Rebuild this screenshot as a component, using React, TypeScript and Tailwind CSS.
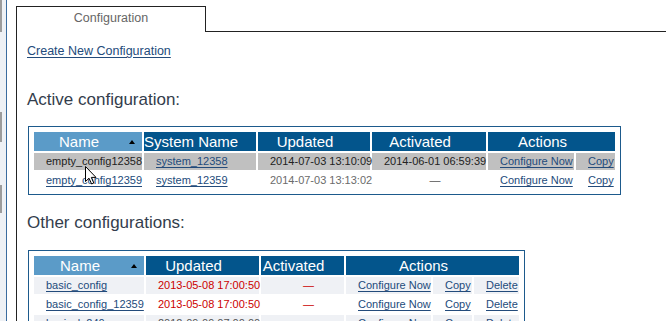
const link = "text-[#234b7b] underline underline-offset-[2px]";
const thBase = "whitespace-nowrap p-0 pr-[18px] text-center font-normal";
const th = `${thBase} bg-[#03558c]`;
const thSorted = `relative ${thBase} bg-[#5b9bc8]`;

function SortArrow() {
  return (
    <span className="absolute right-[7px] top-[8px] h-0 w-0 border-x-[3px] border-b-[4px] border-x-transparent border-b-black" />
  );
}

function Cursor() {
  return (
    <svg className="absolute left-[85px] top-[166px]" width="13" height="19" viewBox="0 0 13 19">
      <path d="M0.5 0.5 L0.5 15.5 L4 12.2 L6.6 18 L8.8 17 L6.3 11.4 L11 11.4 Z" fill="#fff" stroke="#000" strokeWidth="1" />
    </svg>
  );
}

export default function App() {
  return (
    <div className="relative flex h-[321px] w-[666px] overflow-hidden bg-white font-['Liberation_Sans',Arial,sans-serif] text-[#222]">
      {/* side rail */}
      <div className="flex w-[6px] shrink-0 flex-col bg-[#eef1f5]">
        <div className="h-[32px] w-[2px] bg-[#9c9c9c]" />
        <div className="mt-[80px] h-[30px] w-[2px] bg-[#9c9c9c]" />
        <div className="mt-[43px] h-[28px] w-[2px] bg-[#9c9c9c]" />
      </div>
      <div className="w-px shrink-0 bg-[#3b6c9f]" />
      <div className="w-[9px] shrink-0" />

      <div className="mt-[6px] flex flex-1 flex-col border-l border-[#222]">
        <div className="flex h-[26px] shrink-0">
          <div className="w-[189px] border-r border-t border-[#222] pt-[4px] text-center text-[12.5px] leading-[14px] text-[#666]">
            Configuration
          </div>
          <div className="flex-1 border-b border-[#222]" />
        </div>

        <div className="pl-[10px]">
          <a className={`mt-[12px] block w-fit text-[12.5px] leading-[14px] ${link}`}>Create New Configuration</a>

          <h2 className="mt-[32px] text-[17px] font-normal leading-[20px] text-[#333d4c]">Active configuration:</h2>

          <div className="ml-[1px] mt-[16px] w-fit border border-[#1d5a8c] p-[3px]">
            <table className="w-[585px] table-fixed border-separate border-spacing-[2px] text-[11px] leading-[17px]">
              <colgroup>
                <col className="w-[108px]" />
                <col className="w-[112px]" />
                <col className="w-[112px]" />
                <col className="w-[114px]" />
                <col className="w-[86px]" />
                <col className="w-[39px]" />
              </colgroup>
              <thead>
                <tr className="h-[19px] text-[15px] leading-[19px] text-white">
                  <th className={thSorted}>
                    Name
                    <SortArrow />
                  </th>
                  <th className={th}>System Name</th>
                  <th className={th}>Updated</th>
                  <th className={th}>Activated</th>
                  <th colSpan={2} className={th}>
                    Actions
                  </th>
                </tr>
              </thead>
              <tbody>
                <tr className="h-[17px] bg-[#c0c0c0] text-[#222]">
                  <td className="whitespace-nowrap p-0 pl-3">empty_config12358</td>
                  <td className="p-0 pl-3">
                    <a className={link}>system_12358</a>
                  </td>
                  <td className="whitespace-nowrap p-0 pl-3">2014-07-03 13:10:09</td>
                  <td className="whitespace-nowrap p-0 pl-3">2014-06-01 06:59:39</td>
                  <td className="whitespace-nowrap p-0 pl-3">
                    <a className={link}>Configure Now</a>
                  </td>
                  <td className="p-0 pl-3">
                    <a className={link}>Copy</a>
                  </td>
                </tr>
                <tr className="h-[17px]">
                  <td className="whitespace-nowrap p-0 pl-3">
                    <a className={link}>empty_config12359</a>
                  </td>
                  <td className="p-0 pl-3">
                    <a className={link}>system_12359</a>
                  </td>
                  <td className="whitespace-nowrap p-0 pl-3 text-[#6b6b6b]">2014-07-03 13:13:02</td>
                  <td className="p-0 pl-3 text-center text-[#555]">—</td>
                  <td className="whitespace-nowrap p-0 pl-3">
                    <a className={link}>Configure Now</a>
                  </td>
                  <td className="p-0 pl-3">
                    <a className={link}>Copy</a>
                  </td>
                </tr>
              </tbody>
            </table>
          </div>

          <h2 className="mt-[18px] text-[17px] font-normal leading-[20px] text-[#333d4c]">Other configurations:</h2>

          <div className="ml-[1px] mt-[17px] w-fit border border-[#1d5a8c] p-[3px]">
            <table className="w-[489px] table-fixed border-separate border-spacing-[2px] text-[11px] leading-[17px]">
              <colgroup>
                <col className="w-[110px]" />
                <col className="w-[113px]" />
                <col className="w-[83px]" />
                <col className="w-[85px]" />
                <col className="w-[39px]" />
                <col className="w-[45px]" />
              </colgroup>
              <thead>
                <tr className="h-[19px] text-[15px] leading-[19px] text-white">
                  <th className={thSorted}>
                    Name
                    <SortArrow />
                  </th>
                  <th className={th}>Updated</th>
                  <th className={th}>Activated</th>
                  <th colSpan={3} className={th}>
                    Actions
                  </th>
                </tr>
              </thead>
              <tbody>
                {[
                  { name: "basic_config", updated: "2013-05-08 17:00:50", bg: "bg-[#eff1f5]", red: true },
                  { name: "basic_config_12359", updated: "2013-05-08 17:00:50", bg: "bg-white", red: true },
                  { name: "basical_240", updated: "2012-09-09 07:00:00", bg: "bg-[#eff1f5]", red: false },
                ].map((r) => (
                  <tr key={r.name} className="h-[17px]">
                    <td className={`whitespace-nowrap p-0 pl-3 ${r.bg}`}>
                      <a className={link}>{r.name}</a>
                    </td>
                    <td className={`whitespace-nowrap p-0 pl-3 ${r.bg} ${r.red ? "text-[#cc0000]" : "text-[#555]"}`}>
                      {r.updated}
                    </td>
                    <td className={`p-0 pl-3 text-center text-[#cc0000] ${r.bg}`}>{r.red ? "—" : ""}</td>
                    <td className={`whitespace-nowrap p-0 pl-3 ${r.bg}`}>
                      <a className={link}>Configure Now</a>
                    </td>
                    <td className={`p-0 pl-3 ${r.bg}`}>
                      <a className={link}>Copy</a>
                    </td>
                    <td className={`p-0 pl-3 ${r.bg}`}>
                      <a className={link}>Delete</a>
                    </td>
                  </tr>
                ))}
              </tbody>
            </table>
          </div>
        </div>
      </div>

      <Cursor />
    </div>
  );
}
